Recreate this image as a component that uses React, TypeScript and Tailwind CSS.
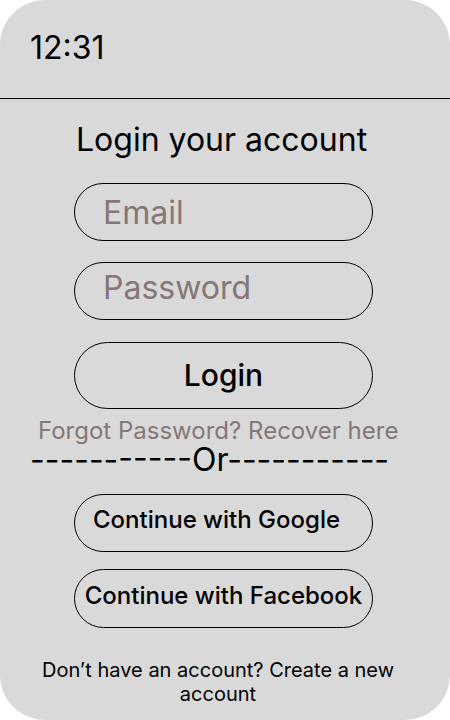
export default function App() {
  return (
    <div className="w-[450px] h-[720px] bg-white" style={{ fontFamily: "Inter, 'Noto Sans', sans-serif" }}>
      <div className="w-full h-full rounded-[45px] bg-[#d9d9d9] flex flex-col overflow-hidden">
        <div className="h-[99px] border-b border-black px-[30px] pt-[32px] shrink-0">
          <span className="block text-[32px] leading-[32px] text-black">12:31</span>
        </div>
        <div className="flex flex-col items-start">
          <h1 className="mt-[25px] ml-[76px] text-[32px] leading-[32px] text-black">Login your account</h1>
          <input
            placeholder="Email"
            className="mt-[27px] ml-[74px] w-[299px] h-[58px] rounded-full border border-black bg-transparent pl-[28px] text-[32px] placeholder:text-[#857777] outline-none"
          />
          <input
            placeholder="Password"
            className="mt-[21px] ml-[74px] w-[299px] h-[58px] rounded-full border border-black bg-transparent pl-[28px] pb-[8px] text-[32px] placeholder:text-[#857777] outline-none"
          />
          <button className="mt-[22px] ml-[74px] w-[299px] h-[67px] rounded-full border border-black text-[30px] font-medium text-black">
            Login
          </button>
          <p className="mt-[10px] ml-[38px] text-[24px] leading-[24px] text-[#857777]">Forgot Password? Recover here</p>
          <p className="mt-[3px] ml-[30px] text-[32px] leading-[28px] text-black">-----------Or-----------</p>
          <button className="mt-[20px] ml-[74px] w-[299px] h-[58px] rounded-full border border-black text-left pl-[18px] pb-[6px] text-[24px] font-medium text-black">
            Continue with Google
          </button>
          <button className="mt-[17px] ml-[74px] w-[299px] h-[59px] rounded-full border border-black text-center pb-[6px] text-[24px] font-medium text-black">
            Continue with Facebook
          </button>
          <p className="mt-[30px] ml-[18px] w-[400px] text-center text-[20px] leading-[24px] text-black">
            Don’t have an account? Create a new account
          </p>
        </div>
      </div>
    </div>
  );
}
